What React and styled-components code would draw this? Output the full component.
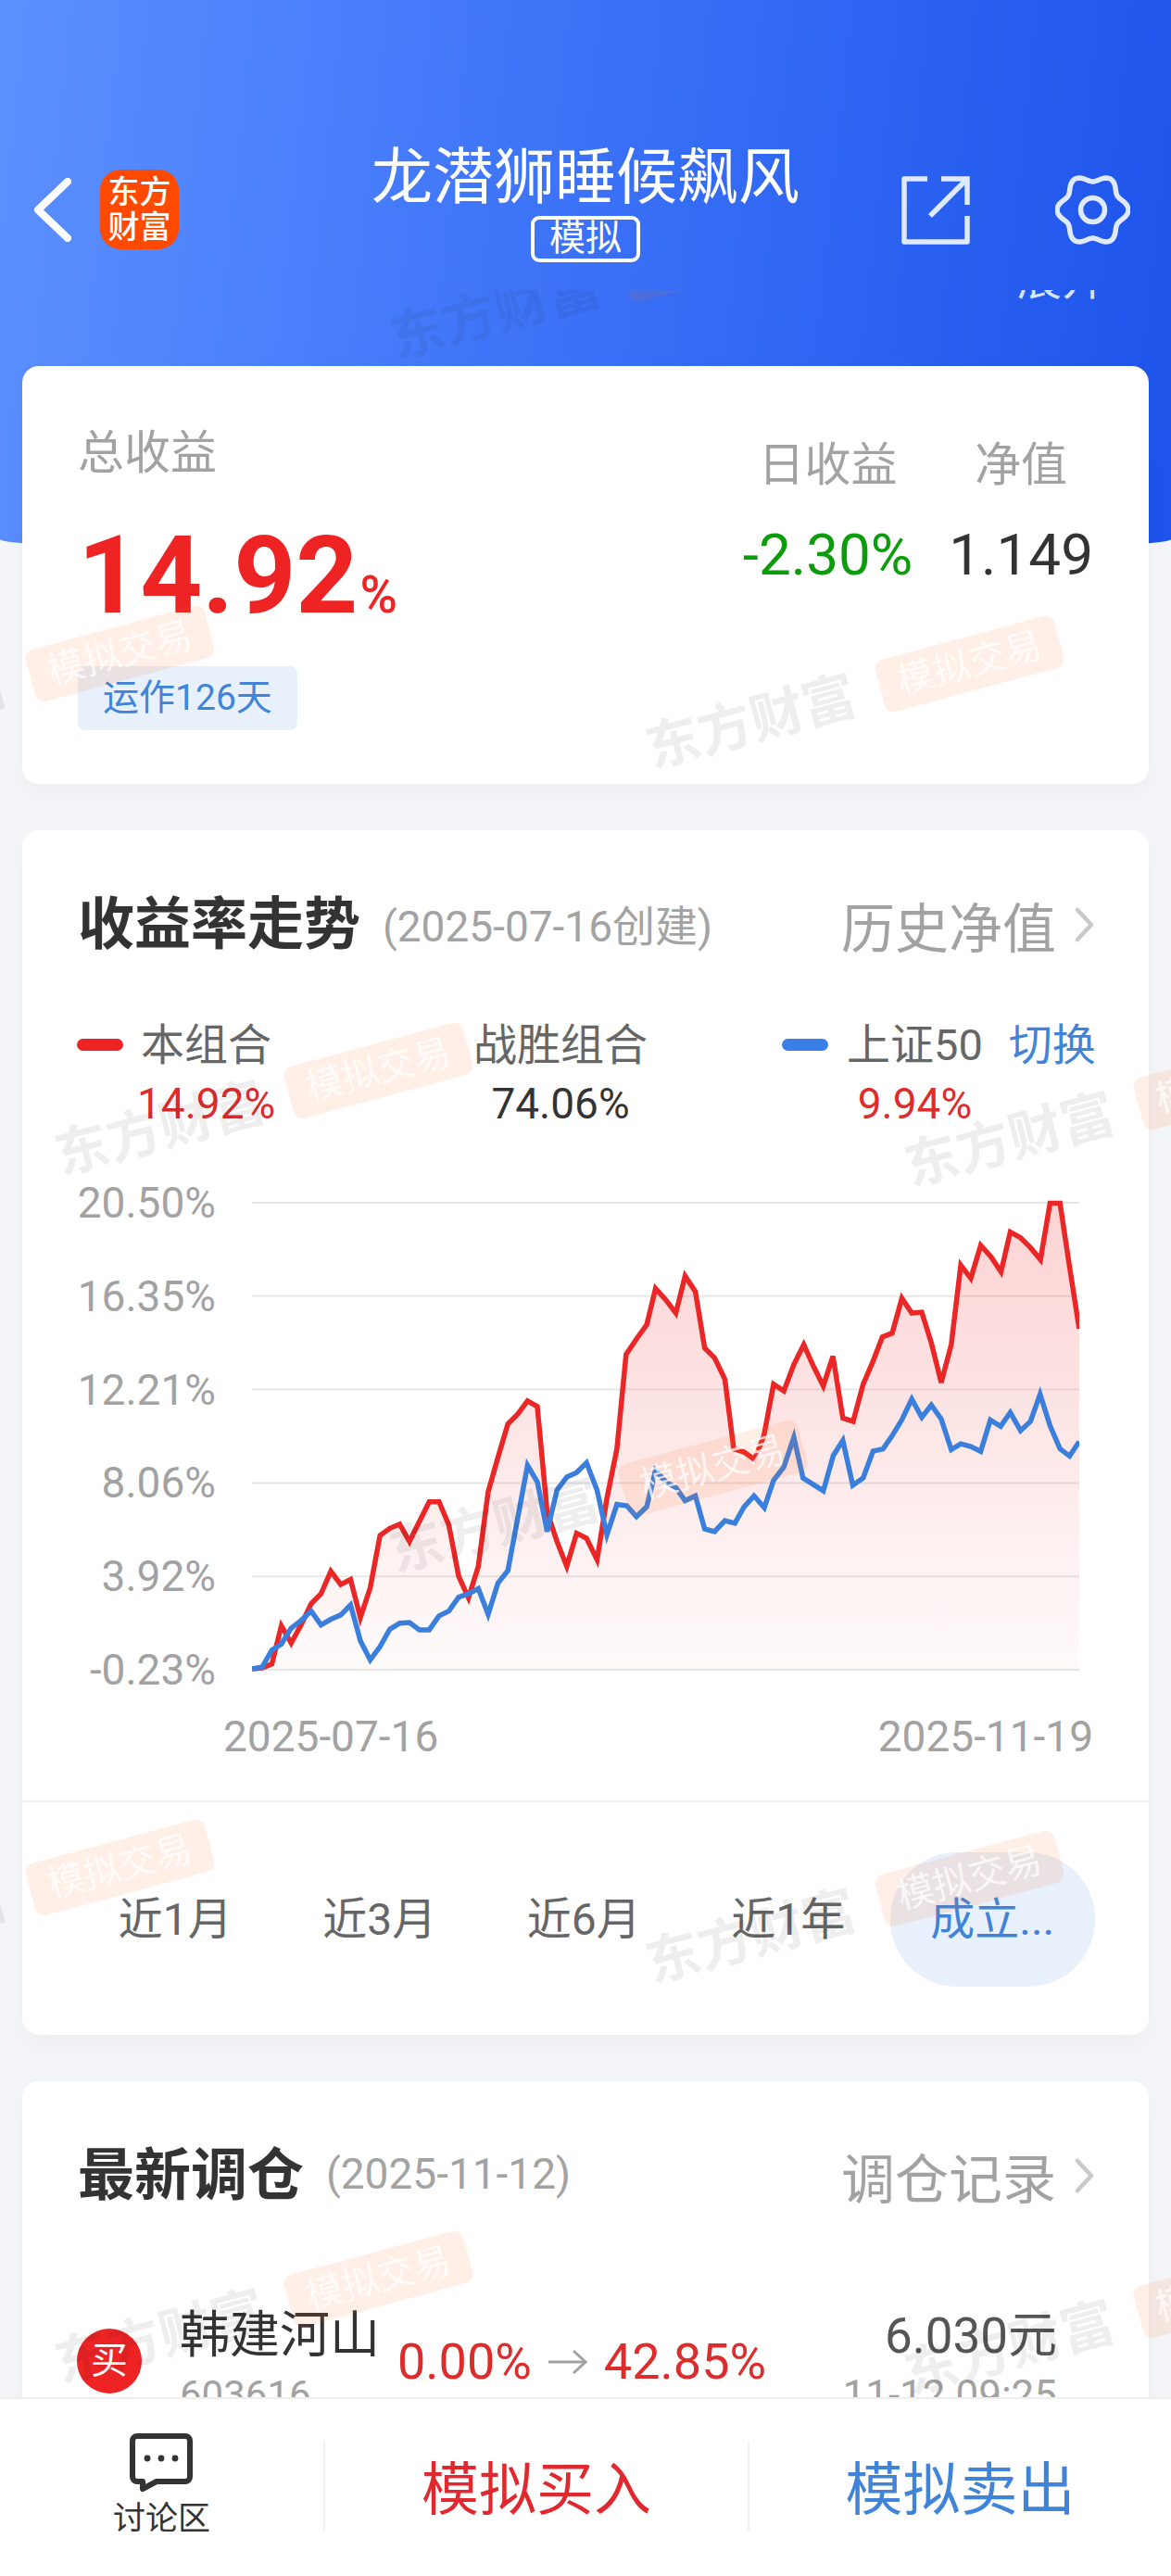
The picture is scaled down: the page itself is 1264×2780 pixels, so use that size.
import React from "react";
import styled, { createGlobalStyle } from "styled-components";

const BLUE = "#3f84d8";
const RED = "#ee2323";

// traced from the chart, [x, y] in chart pixels
const toLeft = ([x, y]) => [x / 2.45 - 212, y / 2.8 - 18];
const toRight = ([x, y]) => [368 + x / 2.513, y / 2.8 - 18];

const redLine = [
  ...[
    [520, 1515], [546, 1512], [572, 1500], [597, 1385], [623, 1437], [650, 1380], [676, 1318], [702, 1288],
    [728, 1220], [754, 1260], [780, 1245], [806, 1360], [832, 1270], [858, 1112], [884, 1090], [910, 1078],
    [936, 1130], [962, 1070], [988, 1010], [1014, 1010], [1040, 1080], [1066, 1235], [1092, 1300], [1118, 1205],
    [1144, 980], [1170, 875], [1196, 775], [1222, 745], [1248, 705], [1274, 722], [1300, 1040], [1326, 1130],
    [1352, 1205], [1378, 1105], [1404, 1120], [1432, 1185],
  ].map(toLeft),
  ...[
    [38, 1000], [65, 850], [90, 565], [118, 518], [146, 475], [170, 365], [198, 400], [225, 440], [250, 328],
    [278, 375], [303, 545], [330, 575], [358, 640], [382, 850], [410, 860], [438, 882], [464, 810], [490, 655],
    [518, 675], [545, 595], [572, 535], [598, 600], [625, 660], [651, 570], [678, 757], [706, 767], [733, 655],
    [760, 585], [785, 512], [812, 500], [838, 395], [865, 440], [892, 437], [918, 530], [945, 650], [972, 535],
    [998, 295], [1025, 335], [1052, 235], [1080, 270], [1107, 315], [1132, 195], [1160, 212], [1187, 242],
    [1214, 278], [1240, 108], [1267, 108], [1293, 300], [1319, 487],
  ].map(toRight),
];

const blueLine = [
  ...[
    [520, 1515], [546, 1510], [572, 1458], [597, 1440], [623, 1392], [650, 1368], [676, 1340], [702, 1382],
    [728, 1365], [754, 1352], [780, 1322], [806, 1430], [832, 1488], [858, 1448], [884, 1395], [910, 1377],
    [936, 1375], [962, 1397], [988, 1397], [1014, 1355], [1040, 1340], [1066, 1298], [1092, 1288], [1118, 1272],
    [1144, 1350], [1170, 1255], [1196, 1218], [1222, 1060], [1248, 900], [1274, 950], [1300, 1100], [1326, 975],
    [1352, 935], [1378, 922], [1404, 892], [1432, 975],
  ].map(toLeft),
  ...[
    [38, 1110], [65, 1018], [92, 1022], [118, 1055], [146, 1025], [170, 915], [198, 950], [225, 967], [250, 1007],
    [278, 992], [303, 1092], [330, 1100], [358, 1067], [385, 1075], [410, 1025], [437, 992], [465, 1028], [490, 945],
    [518, 905], [545, 815], [570, 938], [598, 958], [625, 977], [652, 870], [678, 825], [705, 960], [733, 938],
    [760, 857], [787, 850], [812, 810], [838, 762], [865, 700], [892, 755], [918, 718], [945, 760], [972, 852],
    [998, 835], [1025, 843], [1052, 858], [1078, 763], [1106, 782], [1132, 740], [1160, 795], [1187, 767],
    [1213, 685], [1240, 780], [1267, 850], [1293, 872], [1319, 828],
  ].map(toRight),
];

const toPoints = (list) => list.map(([x, y]) => `${x.toFixed(1)},${y.toFixed(1)}`).join(" ");
const gridLines = [20, 120.8, 221.6, 322.4, 423.2, 524];
const axisLabels = ["20.50%", "16.35%", "12.21%", "8.06%", "3.92%", "-0.23%"];
const areaPoints = `${toPoints(redLine)} 893,524 0,524`;

// wavy six lobe outline of the settings icon
const gearPath = (() => {
  const parts = [];
  for (let deg = 0; deg < 360; deg += 4) {
    const a = (deg * Math.PI) / 180;
    const r = 34.5 + 4 * Math.cos(6 * a);
    parts.push(`${(40.5 + r * Math.cos(a)).toFixed(2)} ${(38.5 + r * Math.sin(a)).toFixed(2)}`);
  }
  return `M${parts.join("L")}Z`;
})();

// badge centres of the repeated watermark, page coordinates
const watermarks = [
  [766, 277], [125, 708], [1042, 719], [404, 1158], [1321, 1170], [765, 1587],
  [125, 2018], [1042, 2030], [404, 2462], [1321, 2474],
];

const Global = createGlobalStyle`
  html, body {
    margin: 0;
    padding: 0;
    background: #f4f5f8;
  }
  * {
    box-sizing: border-box;
  }
  body {
    font-family: Roboto, "Noto Sans CJK SC", sans-serif;
  }
`;

const Page = styled.div`
  width: 1264px;
  height: 2780px;
  display: flex;
  flex-direction: column;
  overflow: hidden;
`;

const Scroller = styled.div`
  position: relative;
  flex: 1;
  min-height: 0;
  overflow: hidden;
`;

const Hero = styled.header`
  height: 598px;
  background: linear-gradient(96deg, #5c90ff 0%, #3d74f8 45%, #1d53ea 100%);
  border-radius: 0 0 50% 50% / 0 0 16px 16px;
`;

const TopBar = styled.div`
  height: 313px;
  padding-top: 160px;
  display: grid;
  grid-template-columns: 1fr auto 1fr;
  align-items: start;
`;

const LeftTools = styled.div`
  display: flex;
  align-items: center;
  gap: 31px;
  padding: 23px 0 0 36px;
`;

const RightTools = styled.div`
  display: flex;
  align-items: center;
  justify-content: flex-end;
  gap: 92px;
  padding: 28px 44px 0 0;
`;

const Logo = styled.div`
  width: 85px;
  height: 86px;
  border-radius: 22px;
  background: #ff4a00;
  color: #fff;
  font-size: 34px;
  font-weight: 500;
  line-height: 38px;
  display: flex;
  align-items: center;
  justify-content: center;
  text-align: center;
`;

const TitleBlock = styled.div`
  display: flex;
  flex-direction: column;
  align-items: center;
`;

const Title = styled.h1`
  margin: 0;
  color: #fff;
  font-size: 66px;
  font-weight: 400;
  line-height: 64px;
  white-space: nowrap;
`;

const SimTag = styled.span`
  margin-top: 9px;
  width: 118px;
  height: 50px;
  border: 4px solid #fff;
  border-radius: 9px;
  color: #fff;
  font-size: 39px;
  line-height: 40px;
  text-align: center;
`;

const Peek = styled.div`
  height: 10px;
  padding-right: 70px;
  display: flex;
  justify-content: flex-end;
  align-items: flex-end;
  overflow: hidden;
  color: #d8e4ff;
  font-size: 48px;
  line-height: 48px;
`;

const PeekText = styled.span`
  margin-bottom: -3px;
`;

const Content = styled.main`
  margin-top: -203px;
  padding: 0 24px;
  display: flex;
  flex-direction: column;
  gap: 50px;
`;

const Card = styled.section`
  background: #fff;
  border-radius: 18px;
  box-shadow: 0 10px 24px rgba(40, 50, 80, 0.035);
`;

const SummaryCard = styled(Card)`
  height: 451px;
  padding: 66px 60px 0;
  display: flex;
  justify-content: space-between;
  align-items: flex-start;
`;

const Muted = styled.div`
  color: #a2a2a2;
  font-size: 50px;
  line-height: 56px;
`;

const BigValue = styled.div`
  margin-top: 47px;
  height: 114px;
  color: ${RED};
  font-size: 117px;
  font-weight: 700;
  line-height: 114px;
  white-space: nowrap;
`;

const BigUnit = styled.span`
  margin-left: 2px;
  font-size: 55px;
  font-weight: 500;
  line-height: 1;
`;

const DaysTag = styled.div`
  margin-top: 41px;
  width: 237px;
  height: 69px;
  border-radius: 8px;
  background: #e8f1fb;
  color: ${BLUE};
  font-size: 39px;
  line-height: 69px;
  text-align: center;
`;

const SideStats = styled.div`
  margin-top: 13px;
  display: flex;
  gap: 39px;
`;

const SideStat = styled.div`
  display: flex;
  flex-direction: column;
  align-items: center;
`;

const SideValue = styled.div`
  margin-top: 38px;
  color: ${(p) => p.$color};
  font-size: 62px;
  line-height: 62px;
`;

const ChartCard = styled(Card)`
  height: 1300px;
  padding-top: 70px;
`;

const CardHead = styled.div`
  height: 64px;
  padding: 0 59px 0 60px;
  display: flex;
  align-items: center;
`;

const HeadTitle = styled.h2`
  margin: 0;
  color: #333;
  font-size: 61px;
  font-weight: 700;
  line-height: 64px;
`;

const HeadNote = styled.span`
  margin: 0 0 5px 24px;
  color: #a3a3a3;
  font-size: 46px;
`;

const HeadLink = styled.div`
  margin-left: auto;
  display: flex;
  align-items: center;
  gap: 20px;
  color: #a2a2a2;
  font-size: 58px;
`;

const Legend = styled.div`
  margin-top: 73px;
  padding-left: 59px;
  display: grid;
  grid-template-columns: 428px 333px 1fr;
`;

const LegendItem = styled.div`
  display: flex;
  align-items: flex-start;
  gap: ${(p) => p.$gap}px;
`;

const Marker = styled.i`
  margin-top: 18px;
  width: 50px;
  height: 13px;
  border-radius: 7px;
  background: ${(p) => p.$color};
`;

const LegendStack = styled.div`
  display: flex;
  flex-direction: column;
  align-items: center;
`;

const LegendLabel = styled.div`
  color: #666;
  font-size: 47px;
  line-height: 50px;
  white-space: nowrap;
`;

const LegendValue = styled.div`
  margin-top: 15px;
  color: ${(p) => p.$color};
  font-size: 46px;
  line-height: 46px;
`;

const SwitchLink = styled.span`
  margin-left: 8px;
  color: ${BLUE};
  font-size: 47px;
  line-height: 50px;
  white-space: nowrap;
`;

const ChartRow = styled.div`
  margin-top: 64px;
  padding-left: 60px;
  display: flex;
  gap: 39px;
`;

const Axis = styled.div`
  width: 149px;
  height: 544px;
  display: flex;
  flex-direction: column;
  justify-content: space-between;
  align-items: flex-end;
  color: #a2a2a2;
  font-size: 46px;
  line-height: 40px;
`;

const DateRow = styled.div`
  margin-top: 32px;
  padding: 0 60px 0 217px;
  display: flex;
  justify-content: space-between;
  color: #a2a2a2;
  font-size: 46px;
  line-height: 40px;
`;

const Tabs = styled.div`
  margin-top: 49px;
  padding: 54px 0 0 55px;
  border-top: 2px solid #f0f0f0;
  display: flex;
`;

const Tab = styled.div`
  width: 220.5px;
  height: 145px;
  border-radius: 72px;
  background: ${(p) => (p.$active ? "#e8f0fb" : "transparent")};
  color: ${(p) => (p.$active ? BLUE : "#666")};
  font-size: 48px;
  line-height: 145px;
  text-align: center;
`;

const TradeCard = styled(Card)`
  padding-top: 70px;
  height: 600px;
`;

const TradeRow = styled.div`
  margin-top: 111px;
  padding: 0 99px 0 59px;
  display: flex;
  align-items: flex-start;
`;

const SideBadge = styled.div`
  margin-top: 22px;
  width: 70px;
  height: 70px;
  border-radius: 50%;
  background: ${RED};
  color: #fff;
  font-size: 40px;
  line-height: 70px;
  text-align: center;
`;

const StockCol = styled.div`
  margin-left: 41px;
  width: 235px;
`;

const StockName = styled.div`
  color: #333;
  font-size: 54px;
  line-height: 60px;
`;

const SubText = styled.div`
  margin-top: 13px;
  color: #a2a2a2;
  font-size: ${(p) => p.$size}px;
  line-height: 42px;
  white-space: nowrap;
`;

const Change = styled.div`
  margin-top: 32px;
  display: flex;
  align-items: center;
  gap: 18px;
  color: #dc2c2c;
  font-size: 54px;
  line-height: 52px;
`;

const PriceCol = styled.div`
  margin-left: auto;
  text-align: right;
`;

const Price = styled.div`
  color: #555;
  font-size: 53px;
  line-height: 60px;
`;

const Watermarks = styled.div`
  position: absolute;
  top: 313px;
  left: 0;
  right: 0;
  bottom: 0;
  overflow: hidden;
  pointer-events: none;
`;

const Mark = styled.div`
  position: absolute;
  left: ${(p) => p.$x}px;
  top: ${(p) => p.$y}px;
  width: 460px;
  display: flex;
  align-items: center;
  justify-content: space-between;
  transform: translate(-50%, -50%) rotate(-15deg);
`;

const MarkName = styled.span`
  color: rgba(30, 30, 40, 0.075);
  font-size: 58px;
  font-weight: 700;
  line-height: 60px;
  white-space: nowrap;
`;

const MarkBadge = styled.span`
  width: 200px;
  height: 58px;
  border-radius: 10px;
  background: rgba(255, 110, 30, 0.11);
  color: rgba(255, 255, 255, 0.75);
  font-size: 40px;
  line-height: 58px;
  text-align: center;
  white-space: nowrap;
`;

const BottomBar = styled.footer`
  height: 193px;
  flex-shrink: 0;
  border-top: 2px solid #eee;
  background: #fff;
  display: grid;
  grid-template-columns: 349px 458px 1fr;
  align-items: center;
`;

const BarCell = styled.div`
  height: 97px;
  margin-top: -5px;
  display: flex;
  align-items: center;
  justify-content: center;
  border-left: ${(p) => (p.$divided ? "2px solid #f0f0f0" : "none")};
  color: ${(p) => p.$color};
  font-size: 62px;
  white-space: nowrap;
`;

const TalkCell = styled.div`
  display: flex;
  flex-direction: column;
  align-items: center;
  color: #333;
  font-size: 35px;
  line-height: 40px;
  gap: 8px;
`;

const BackIcon = () => (
  <svg width="41" height="69" viewBox="0 0 41 69" fill="none">
    <path d="M37 4 5 34.5 37 65" stroke="#fff" strokeWidth="8" strokeLinecap="round" strokeLinejoin="round" />
  </svg>
);

const ShareIcon = () => (
  <svg width="74" height="74" viewBox="0 0 74 74" fill="none" stroke="#dfe9ff" strokeWidth="5.5">
    <path d="M28 3H3V71H71V43" strokeLinejoin="round" />
    <path d="M31 43 71 3" />
    <path d="M43 3H71V31" />
  </svg>
);

const GearIcon = () => (
  <svg width="81" height="77" viewBox="0 0 81 77" fill="none" stroke="#dfe9ff" strokeWidth="5.5">
    <path d={gearPath} strokeLinejoin="round" />
    <circle cx="40.5" cy="38.5" r="13" />
  </svg>
);

const Chevron = () => (
  <svg width="21" height="38" viewBox="0 0 21 38" fill="none">
    <path d="M3 3 18 19 3 35" stroke="#c9c9c9" strokeWidth="4.5" strokeLinecap="round" strokeLinejoin="round" />
  </svg>
);

const ArrowIcon = () => (
  <svg width="42" height="28" viewBox="0 0 42 28" fill="none" stroke="#a2a2a2" strokeWidth="3">
    <path d="M0 14H40" />
    <path d="M27 2 40 14 27 26" />
  </svg>
);

const TalkIcon = () => (
  <svg width="68" height="65" viewBox="0 0 68 65" fill="none">
    <path
      d="M8 3H60A5 5 0 0 1 65 8V47A5 5 0 0 1 60 52H29L14 60V52H8A5 5 0 0 1 3 47V8A5 5 0 0 1 8 3Z"
      stroke="#333"
      strokeWidth="6"
      strokeLinejoin="round"
    />
    <circle cx="19" cy="27" r="3.4" fill="#333" />
    <circle cx="34" cy="27" r="3.4" fill="#333" />
    <circle cx="49" cy="27" r="3.4" fill="#333" />
  </svg>
);

const TrendChart = () => (
  <svg width="893" height="544" viewBox="0 0 893 544" fill="none">
    <defs>
      <linearGradient id="redFill" x1="0" y1="20" x2="0" y2="524" gradientUnits="userSpaceOnUse">
        <stop offset="0" stopColor="#ee2323" stopOpacity="0.2" />
        <stop offset="1" stopColor="#ee2323" stopOpacity="0.02" />
      </linearGradient>
    </defs>
    {gridLines.map((y) => (
      <line key={y} x1="0" x2="893" y1={y} y2={y} stroke="#e7e7e7" strokeWidth="2" />
    ))}
    <polygon points={areaPoints} fill="url(#redFill)" />
    <polyline points={toPoints(redLine)} stroke="#ea2626" strokeWidth="5.5" />
    <polyline points={toPoints(blueLine)} stroke="#3a7fdc" strokeWidth="5.5" />
  </svg>
);

const App = () => (
  <Page>
    <Global />
    <Scroller>
      <Hero>
        <TopBar>
          <LeftTools>
            <BackIcon />
            <Logo>
              东方
              <br />
              财富
            </Logo>
          </LeftTools>
          <TitleBlock>
            <Title>龙潜狮睡候飙风</Title>
            <SimTag>模拟</SimTag>
          </TitleBlock>
          <RightTools>
            <ShareIcon />
            <GearIcon />
          </RightTools>
        </TopBar>
        <Peek>
          <PeekText>展开</PeekText>
        </Peek>
      </Hero>

      <Content>
        <SummaryCard>
          <div>
            <Muted>总收益</Muted>
            <BigValue>
              14.92<BigUnit>%</BigUnit>
            </BigValue>
            <DaysTag>运作126天</DaysTag>
          </div>
          <SideStats>
            <SideStat>
              <Muted>日收益</Muted>
              <SideValue $color="#0a9c0a">-2.30%</SideValue>
            </SideStat>
            <SideStat>
              <Muted>净值</Muted>
              <SideValue $color="#333">1.149</SideValue>
            </SideStat>
          </SideStats>
        </SummaryCard>

        <ChartCard>
          <CardHead>
            <HeadTitle>收益率走势</HeadTitle>
            <HeadNote>(2025-07-16创建)</HeadNote>
            <HeadLink>
              历史净值
              <Chevron />
            </HeadLink>
          </CardHead>
          <Legend>
            <LegendItem $gap={15}>
              <Marker $color={RED} />
              <LegendStack>
                <LegendLabel>本组合</LegendLabel>
                <LegendValue $color="#dc2c2c">14.92%</LegendValue>
              </LegendStack>
            </LegendItem>
            <LegendItem $gap={0}>
              <LegendStack>
                <LegendLabel>战胜组合</LegendLabel>
                <LegendValue $color="#333">74.06%</LegendValue>
              </LegendStack>
            </LegendItem>
            <LegendItem $gap={20}>
              <Marker $color="#3a7fe8" />
              <LegendStack>
                <LegendLabel>上证50</LegendLabel>
                <LegendValue $color="#dc2c2c">9.94%</LegendValue>
              </LegendStack>
              <SwitchLink>切换</SwitchLink>
            </LegendItem>
          </Legend>
          <ChartRow>
            <Axis>
              {axisLabels.map((label) => (
                <span key={label}>{label}</span>
              ))}
            </Axis>
            <TrendChart />
          </ChartRow>
          <DateRow>
            <span>2025-07-16</span>
            <span>2025-11-19</span>
          </DateRow>
          <Tabs>
            <Tab>近1月</Tab>
            <Tab>近3月</Tab>
            <Tab>近6月</Tab>
            <Tab>近1年</Tab>
            <Tab $active>成立...</Tab>
          </Tabs>
        </ChartCard>

        <TradeCard>
          <CardHead>
            <HeadTitle>最新调仓</HeadTitle>
            <HeadNote>(2025-11-12)</HeadNote>
            <HeadLink>
              调仓记录
              <Chevron />
            </HeadLink>
          </CardHead>
          <TradeRow>
            <SideBadge>买</SideBadge>
            <StockCol>
              <StockName>韩建河山</StockName>
              <SubText $size={42}>603616</SubText>
            </StockCol>
            <Change>
              0.00%
              <ArrowIcon />
              42.85%
            </Change>
            <PriceCol>
              <Price>6.030元</Price>
              <SubText $size={44}>11-12 09:25</SubText>
            </PriceCol>
          </TradeRow>
        </TradeCard>
      </Content>

      <Watermarks>
        {watermarks.map(([x, y]) => (
          <Mark key={`${x}-${y}`} $x={x - 121} $y={y + 31 - 313}>
            <MarkName>东方财富</MarkName>
            <MarkBadge>模拟交易</MarkBadge>
          </Mark>
        ))}
      </Watermarks>
    </Scroller>

    <BottomBar>
      <BarCell>
        <TalkCell>
          <TalkIcon />
          讨论区
        </TalkCell>
      </BarCell>
      <BarCell $divided $color="#e0282e">
        模拟买入
      </BarCell>
      <BarCell $divided $color={BLUE}>
        模拟卖出
      </BarCell>
    </BottomBar>
  </Page>
);

export default App;
